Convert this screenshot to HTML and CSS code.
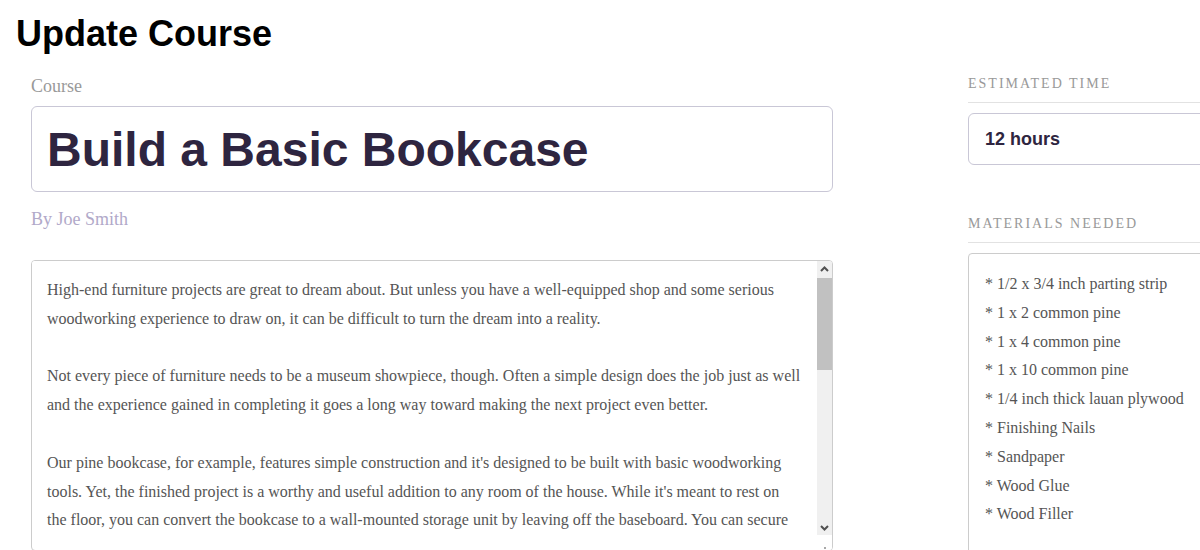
FILE: index.html
```html
<!DOCTYPE html>
<html lang="en">
<head>
<meta charset="utf-8">
<title>Update Course</title>
<link rel="stylesheet" href="styles.css">
</head>
<body>
<h1 class="page-title">Update Course</h1>
<main class="layout">
  <section class="col-main">
    <label class="field-label" for="course-title">Course</label>
    <div class="title-box"><input id="course-title" class="title-input" type="text" value="Build a Basic Bookcase"></div>
    <p class="author">By Joe Smith</p>
    <div class="desc-box">
      <textarea class="desc-text" readonly>High-end furniture projects are great to dream about. But unless you have a well-equipped shop and some serious woodworking experience to draw on, it can be difficult to turn the dream into a reality.

Not every piece of furniture needs to be a museum showpiece, though. Often a simple design does the job just as well and the experience gained in completing it goes a long way toward making the next project even better.

Our pine bookcase, for example, features simple construction and it's designed to be built with basic woodworking tools. Yet, the finished project is a worthy and useful addition to any room of the house. While it's meant to rest on the floor, you can convert the bookcase to a wall-mounted storage unit by leaving off the baseboard. You can secure the unit to the wall by screwing through the cabinet's back panel into the wall studs.

Before you start, take a good look at the materials list and plan your cuts carefully so that you get the most out of every board. Cut the parts slightly long, then trim them to final length once the case has been dry-fitted and checked for square.

The sides, top and bottom are assembled with glue and finishing nails. Set the nails below the surface, fill the holes with wood filler and sand everything smooth before you apply a finish of your choice.</textarea>
      <div class="scrollbar" aria-hidden="true">
        <div class="sb-btn"><svg width="9" height="6" viewBox="0 0 9 6"><polyline points="1,5 4.5,1.5 8,5" fill="none" stroke="#505050" stroke-width="2"/></svg></div>
        <div class="sb-track"><div class="sb-thumb"></div></div>
        <div class="sb-btn"><svg width="9" height="6" viewBox="0 0 9 6"><polyline points="1,1 4.5,4.5 8,1" fill="none" stroke="#505050" stroke-width="2"/></svg></div>
        <div class="sb-corner"><span class="grip"></span></div>
      </div>
    </div>
  </section>
  <aside class="col-side">
    <h2 class="section-label">Estimated Time</h2>
    <div class="time-box">12 hours</div>
    <h2 class="section-label section-label-gap">Materials Needed</h2>
    <textarea class="materials" readonly>* 1/2 x 3/4 inch parting strip
* 1 x 2 common pine
* 1 x 4 common pine
* 1 x 10 common pine
* 1/4 inch thick lauan plywood
* Finishing Nails
* Sandpaper
* Wood Glue
* Wood Filler</textarea>
  </aside>
</main>
</body>
</html>
```

FILE: styles.css
```css
html, body {
  margin: 0;
  padding: 0;
  background: #ffffff;
  overflow: hidden;
  width: 1200px;
  height: 550px;
}

body {
  font-family: "Liberation Serif", "Times New Roman", serif;
}

.page-title {
  margin: 0;
  padding: 13px 0 0 16px;
  font-family: "Liberation Sans", Arial, sans-serif;
  font-size: 36px;
  line-height: 41px;
  font-weight: bold;
  color: #000000;
}

.layout {
  display: flex;
  margin-top: 21px;
  padding-left: 31px;
  gap: 135px;
}

.col-main {
  width: 802px;
  flex: none;
  display: flex;
  flex-direction: column;
}

.field-label {
  display: block;
  padding-top: 1px;
  font-size: 18px;
  line-height: 21px;
  color: #999999;
  margin-bottom: 9px;
}

.title-box {
  box-sizing: border-box;
  height: 86px;
  border: 1px solid #c9c7d6;
  border-radius: 6px;
  display: flex;
  align-items: center;
  padding: 0 15px;
}

.title-input {
  border: none;
  outline: none;
  padding: 0;
  margin: 0;
  width: 100%;
  background: transparent;
  font-family: "Liberation Sans", Arial, sans-serif;
  font-size: 48px;
  line-height: 55px;
  font-weight: bold;
  color: #2e2540;
}

.author {
  margin: 17px 0 0;
  font-size: 18px;
  line-height: 21px;
  color: #b1a9c9;
}

.desc-box {
  margin-top: 30px;
  box-sizing: border-box;
  height: 291px;
  border: 1px solid #cccccc;
  border-radius: 4px;
  display: flex;
  align-items: flex-start;
  overflow: hidden;
}

.desc-text {
  flex: 1;
  box-sizing: border-box;
  height: 278px;
  border: none;
  outline: none;
  resize: none;
  overflow: hidden;
  margin: 0;
  padding: 15px 15px 0 15px;
  font-family: "Liberation Serif", "Times New Roman", serif;
  font-size: 16px;
  line-height: 28.8px;
  color: #555555;
  background: #ffffff;
}

.scrollbar {
  width: 15px;
  height: 100%;
  flex: none;
  display: flex;
  flex-direction: column;
  background: #f0f0f0;
}

.sb-btn {
  height: 15px;
  display: flex;
  align-items: center;
  justify-content: center;
  background: #f0f0f0;
}

.sb-track {
  flex: 1;
  padding-top: 2px;
}

.sb-thumb {
  height: 92px;
  background: #c1c1c1;
}

.sb-corner {
  height: 15px;
  background: #ffffff;
  display: flex;
  align-items: flex-end;
  justify-content: center;
}

.grip {
  width: 2px;
  height: 2px;
  margin-bottom: 1px;
  background: #a8a8a8;
}

.col-side {
  width: 340px;
  flex: none;
  display: flex;
  flex-direction: column;
  padding-top: 1px;
}

.section-label {
  margin: 0;
  padding-bottom: 10px;
  border-bottom: 1px solid #e2e2e2;
  font-family: "Liberation Serif", "Times New Roman", serif;
  font-size: 14px;
  line-height: 16px;
  font-weight: normal;
  letter-spacing: 2px;
  text-transform: uppercase;
  color: #999999;
}

.section-label-gap {
  margin-top: 51px;
}

.time-box {
  margin-top: 10px;
  box-sizing: border-box;
  height: 52px;
  border: 1px solid #c9c7d6;
  border-radius: 6px;
  padding-left: 16px;
  display: flex;
  align-items: center;
  font-family: "Liberation Sans", Arial, sans-serif;
  font-size: 18px;
  font-weight: bold;
  color: #2e2540;
}

.materials {
  margin-top: 10px;
  box-sizing: border-box;
  height: 310px;
  border: 1px solid #cccccc;
  border-radius: 4px;
  outline: none;
  resize: none;
  overflow: hidden;
  padding: 16px 16px 0 16px;
  font-family: "Liberation Serif", "Times New Roman", serif;
  font-size: 16px;
  line-height: 28.8px;
  color: #555555;
  background: #ffffff;
}
```
